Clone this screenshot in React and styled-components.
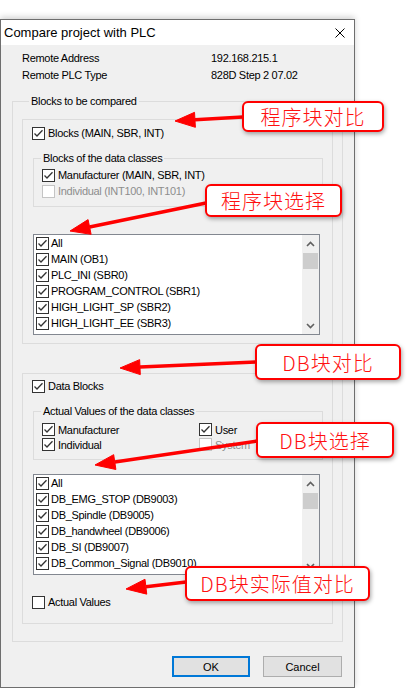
import React from 'react';
import styled, { createGlobalStyle } from 'styled-components';

const GlobalStyle = createGlobalStyle`
  body {
    margin: 0;
    background: #fff;
  }
`;

const BLOCKS = [
  'All',
  'MAIN (OB1)',
  'PLC_INI (SBR0)',
  'PROGRAM_CONTROL (SBR1)',
  'HIGH_LIGHT_SP (SBR2)',
  'HIGH_LIGHT_EE (SBR3)',
];

const DATA_BLOCKS = [
  'All',
  'DB_EMG_STOP (DB9003)',
  'DB_Spindle (DB9005)',
  'DB_handwheel (DB9006)',
  'DB_SI (DB9007)',
  'DB_Common_Signal (DB9010)',
];

// annotation arrows: start (at the callout) -> tip
const ARROWS = [
  [243, 117, 175, 121],
  [206, 203, 70, 231],
  [256, 362, 120, 368],
  [257, 441, 95, 465],
  [186, 582, 126, 589],
];

const CALLOUTS = [
  { x: 242, y: 101, w: 142, h: 31, text: '程序块对比' },
  { x: 205, y: 184, w: 137, h: 33, text: '程序块选择' },
  { x: 255, y: 344, w: 146, h: 36, text: 'DB块对比' },
  { x: 256, y: 422, w: 138, h: 36, text: 'DB块选择' },
  { x: 185, y: 566, w: 185, h: 35, text: 'DB块实际值对比' },
];

const Page = styled.div`
  width: 413px;
  height: 688px;
  padding-top: 19px;
  box-sizing: border-box;
  position: relative;
  overflow: hidden;
  background: #fff;
  font-family: 'Liberation Sans', Tahoma, sans-serif;
  font-size: 11px;
  letter-spacing: -0.3px;
  color: #000;
`;

const Dialog = styled.div`
  width: 355px;
  height: 669px;
  box-sizing: border-box;
  border: 1px solid #6e6e6e;
  background: #f0f0f0;
  box-shadow: 0 -2px 6px rgba(0, 0, 0, 0.18);
  display: flex;
  flex-direction: column;
`;

const TitleBar = styled.div`
  height: 25px;
  flex: none;
  background: #fff;
  display: flex;
  align-items: center;
  justify-content: space-between;
  padding: 0 9px 0 3px;
  font-size: 13px;
  letter-spacing: 0;
`;

const Info = styled.div`
  display: grid;
  grid-template-columns: 189px 1fr;
  grid-auto-rows: 17px;
  align-items: center;
  padding: 4px 0 0 21px;
`;

const Group = styled.div`
  border: 1px solid #dcdcdc;
  display: flex;
  flex-direction: column;
  align-items: flex-start;
  align-self: ${p => (p.$stretch ? 'stretch' : 'auto')};
  margin: ${p => p.$margin};
  padding: ${p => p.$padding};
`;

const Legend = styled.div`
  margin: -8px 0 0 ${p => p.$indent || 7}px;
  padding: 0 2px;
  height: 14px;
  line-height: 14px;
  background: #f0f0f0;
`;

const Row = styled.label`
  display: flex;
  align-items: center;
  gap: 3px;
  height: ${p => p.$h || 16}px;
  margin: ${p => p.$margin || 0};
  color: ${p => (p.$disabled ? '#8d8d8d' : '#000')};
  white-space: nowrap;
`;

const Box = styled.span`
  width: 13px;
  height: 13px;
  flex: none;
  box-sizing: border-box;
  border: 1px solid ${p => (p.$disabled ? '#c4c4c4' : '#333')};
  background: #fff;
  display: flex;
  align-items: center;
  justify-content: center;
`;

const Rows = styled.div`
  display: flex;
  flex-direction: column;
  margin-top: 2px;
`;

const ClassGrid = styled.div`
  display: grid;
  grid-template-columns: 157px 1fr;
  grid-auto-rows: 15px;
  margin-top: 4px;
  width: 100%;
`;

const ListBox = styled.div`
  width: 287px;
  height: 101px;
  box-sizing: border-box;
  border: 1px solid #828790;
  background: #fff;
  display: flex;
  overflow: hidden;
  margin: ${p => p.$margin};
`;

const Items = styled.div`
  flex: 1;
  display: flex;
  flex-direction: column;
  padding-left: 2px;
`;

const ListItem = styled.div`
  display: flex;
  align-items: center;
  gap: 2px;
  height: 16px;
  flex: none;
  white-space: nowrap;
`;

const ScrollBar = styled.div`
  width: 17px;
  flex: none;
  background: #f0f0f0;
  display: flex;
  flex-direction: column;
  align-items: center;
`;

const ScrollArrow = styled.div`
  height: 17px;
  width: 17px;
  display: flex;
  align-items: center;
  justify-content: center;
`;

const Thumb = styled.div`
  width: 15px;
  height: 16px;
  background: #cdcdcd;
  margin-top: 1px;
`;

const Spacer = styled.div`
  flex: 1;
`;

const Buttons = styled.div`
  display: flex;
  justify-content: flex-end;
  gap: 13px;
  margin: 14px 12px 0 0;
`;

const Button = styled.button`
  width: ${p => p.$w}px;
  height: 21px;
  box-sizing: border-box;
  background: #e1e1e1;
  border: ${p => (p.$default ? '2px solid #0078d7' : '1px solid #adadad')};
  font-family: inherit;
  font-size: 11px;
  letter-spacing: 0;
  color: #000;
  padding: 0;
`;

const Arrows = styled.svg`
  position: absolute;
  left: 0;
  top: 0;
  pointer-events: none;
`;

const Callout = styled.div`
  position: absolute;
  left: ${p => p.$x}px;
  top: ${p => p.$y}px;
  width: ${p => p.$w}px;
  height: ${p => p.$h}px;
  box-sizing: border-box;
  border: 2px solid #ff0000;
  border-radius: 6px;
  background: #fff;
  box-shadow: 1px 2px 4px rgba(0, 0, 0, 0.35);
  display: flex;
  align-items: center;
  justify-content: center;
  color: #ff1010;
  font-family: 'Noto Sans CJK SC', sans-serif;
  font-size: 20px;
  font-weight: 300;
  letter-spacing: 1px;
`;

const CheckMark = () => (
  <svg width="11" height="11" viewBox="0 0 11 11">
    <polyline points="1.5,5.5 4,8 9.5,2.2" fill="none" stroke="#333" strokeWidth="1.3" />
  </svg>
);

const Check = ({ checked, disabled, children, ...rest }) => (
  <Row $disabled={disabled} {...rest}>
    <Box $disabled={disabled}>{checked && <CheckMark />}</Box>
    {children}
  </Row>
);

const Chevron = ({ up }) => (
  <svg width="9" height="6" viewBox="0 0 9 6">
    <polyline
      points={up ? '1,5 4.5,1.5 8,5' : '1,1 4.5,4.5 8,1'}
      fill="none"
      stroke="#606060"
      strokeWidth="1.6"
    />
  </svg>
);

const CheckList = ({ items, margin }) => (
  <ListBox $margin={margin}>
    <Items>
      {items.map(item => (
        <ListItem key={item}>
          <Box>
            <CheckMark />
          </Box>
          {item}
        </ListItem>
      ))}
    </Items>
    <ScrollBar>
      <ScrollArrow>
        <Chevron up />
      </ScrollArrow>
      <Thumb />
      <Spacer />
      <ScrollArrow>
        <Chevron />
      </ScrollArrow>
    </ScrollBar>
  </ListBox>
);

const Arrow = ({ x1, y1, x2, y2 }) => {
  const len = Math.hypot(x2 - x1, y2 - y1);
  const dx = (x2 - x1) / len;
  const dy = (y2 - y1) / len;
  const bx = x2 - dx * 20;
  const by = y2 - dy * 20;
  const px = -dy * 7.5;
  const py = dx * 7.5;
  return (
    <g fill="#f00" stroke="#f00">
      <line x1={x1} y1={y1} x2={bx} y2={by} strokeWidth="3.5" />
      <polygon
        points={`${x2},${y2} ${bx + px},${by + py} ${bx - px},${by - py}`}
        strokeWidth="1"
        strokeLinejoin="round"
      />
    </g>
  );
};

export default function App() {
  return (
    <Page>
      <GlobalStyle />
      <Dialog>
        <TitleBar>
          <span>Compare project with PLC</span>
          <svg width="10" height="10" viewBox="0 0 10 10">
            <path d="M0.5 0.5 L9.5 9.5 M9.5 0.5 L0.5 9.5" stroke="#000" strokeWidth="1" />
          </svg>
        </TitleBar>

        <Info>
          <span>Remote Address</span>
          <span>192.168.215.1</span>
          <span>Remote PLC Type</span>
          <span>828D Step 2 07.02</span>
        </Info>

        <Group $margin="18px 11px 0" $padding="0 9px 17px">
          <Legend>Blocks to be compared</Legend>

          <Group $stretch $margin="11px 0 0" $padding="5px 0 8px">
            <Check checked $margin="0 0 0 9px">Blocks (MAIN, SBR, INT)</Check>
            <Group $stretch $margin="17px 9px 0 10px" $padding="0 0 7px 8px">
              <Legend $indent={-1}>Blocks of the data classes</Legend>
              <Rows>
                <Check checked>Manufacturer (MAIN, SBR, INT)</Check>
                <Check disabled>Individual (INT100, INT101)</Check>
              </Rows>
            </Group>
            <CheckList items={BLOCKS} margin="27px 0 0 10px" />
          </Group>

          <Group $stretch $margin="29px 0 0" $padding="4px 0 13px">
            <Check checked $margin="0 0 0 9px">Data Blocks</Check>
            <Group $stretch $margin="17px 9px 0 10px" $padding="0 0 7px 8px">
              <Legend $indent={-1}>Actual Values of the data classes</Legend>
              <ClassGrid>
                <Check checked $h={15}>Manufacturer</Check>
                <Check checked $h={15}>User</Check>
                <Check checked $h={15}>Individual</Check>
                <Check disabled $h={15}>System</Check>
              </ClassGrid>
            </Group>
            <CheckList items={DATA_BLOCKS} margin="14px 0 0 10px" />
            <Check $margin="19px 0 0 9px">Actual Values</Check>
          </Group>
        </Group>

        <Buttons>
          <Button $default $w={78}>OK</Button>
          <Button $w={79}>Cancel</Button>
        </Buttons>
      </Dialog>

      <Arrows width="413" height="688" viewBox="0 0 413 688">
        {ARROWS.map(([x1, y1, x2, y2], i) => (
          <Arrow key={i} x1={x1} y1={y1} x2={x2} y2={y2} />
        ))}
      </Arrows>

      {CALLOUTS.map(c => (
        <Callout key={c.text} $x={c.x} $y={c.y} $w={c.w} $h={c.h}>
          {c.text}
        </Callout>
      ))}
    </Page>
  );
}
